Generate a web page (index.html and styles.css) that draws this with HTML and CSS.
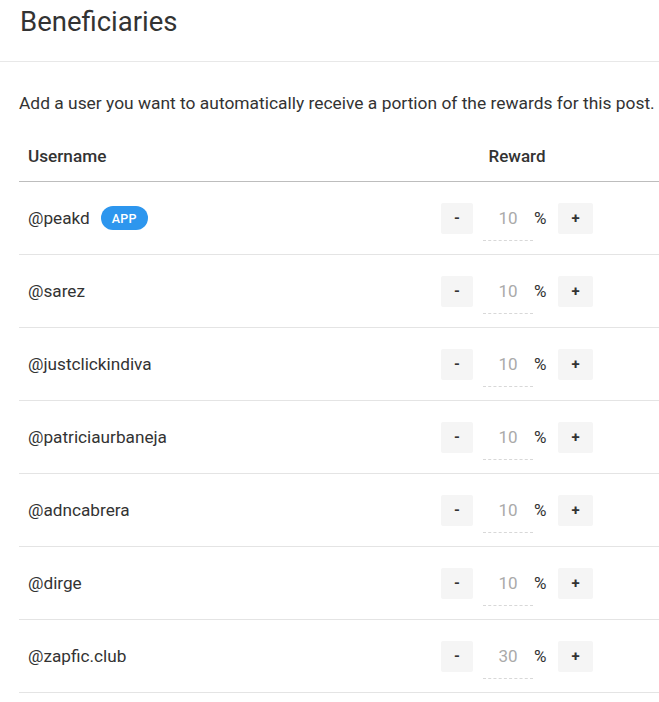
FILE: index.html
```html
<!DOCTYPE html>
<html>
<head>
<meta charset="utf-8">
<link rel="stylesheet" href="styles.css">
</head>
<body>
<div class="page">
  <header class="head">
    <h1 class="title">Beneficiaries</h1>
  </header>
  <section class="content">
    <p class="desc">Add a user you want to automatically receive a portion of the rewards for this post.</p>
    <div class="table">
      <div class="row thead">
        <div class="cell user">Username</div>
        <div class="cell reward">Reward</div>
      </div>
      <div class="row">
        <div class="cell user">@peakd <span class="badge">APP</span></div>
        <div class="cell reward"><div class="ctrl"><span class="btn">-</span><span class="inp">10</span><span class="pct">%</span><span class="btn plus">+</span></div></div>
      </div>
      <div class="row">
        <div class="cell user">@sarez</div>
        <div class="cell reward"><div class="ctrl"><span class="btn">-</span><span class="inp">10</span><span class="pct">%</span><span class="btn plus">+</span></div></div>
      </div>
      <div class="row">
        <div class="cell user">@justclickindiva</div>
        <div class="cell reward"><div class="ctrl"><span class="btn">-</span><span class="inp">10</span><span class="pct">%</span><span class="btn plus">+</span></div></div>
      </div>
      <div class="row">
        <div class="cell user">@patriciaurbaneja</div>
        <div class="cell reward"><div class="ctrl"><span class="btn">-</span><span class="inp">10</span><span class="pct">%</span><span class="btn plus">+</span></div></div>
      </div>
      <div class="row">
        <div class="cell user">@adncabrera</div>
        <div class="cell reward"><div class="ctrl"><span class="btn">-</span><span class="inp">10</span><span class="pct">%</span><span class="btn plus">+</span></div></div>
      </div>
      <div class="row">
        <div class="cell user">@dirge</div>
        <div class="cell reward"><div class="ctrl"><span class="btn">-</span><span class="inp">10</span><span class="pct">%</span><span class="btn plus">+</span></div></div>
      </div>
      <div class="row">
        <div class="cell user">@zapfic.club</div>
        <div class="cell reward"><div class="ctrl"><span class="btn">-</span><span class="inp">30</span><span class="pct">%</span><span class="btn plus">+</span></div></div>
      </div>
    </div>
  </section>
</div>
</body>
</html>
```

FILE: styles.css
```css
* { box-sizing: border-box; }
html, body { margin: 0; padding: 0; background: #fff; }
body {
  font-family: Roboto, "Noto Sans", "Liberation Sans", sans-serif;
  color: #333;
  overflow: hidden;
}
.head {
  height: 62px;
  border-bottom: 1px solid #e8e8e8;
  padding: 3px 20px 0;
}
.title {
  margin: 0;
  font-size: 27.5px;
  font-weight: 400;
  line-height: 38px;
  color: #333;
}
.content {
  padding: 0 0 0 19px;
}
.desc {
  margin: 0;
  padding-top: 30px;
  font-size: 17.4px;
  line-height: 22px;
  color: #333;
}
.table {
  margin-top: 16px;
}
.row {
  display: grid;
  grid-template-columns: 1fr 284px;
  height: 73px;
  border-bottom: 1px solid #e4e4e4;
  align-items: center;
}
.row.thead {
  height: 52px;
  border-bottom-color: #bdbdbd;
  font-weight: 500;
  font-size: 17px;
}
.cell.user {
  padding-left: 9px;
  font-size: 17.2px;
  display: flex;
  align-items: center;
}
.cell.reward {
  display: flex;
  justify-content: center;
}
.badge {
  display: inline-flex;
  align-items: center;
  justify-content: center;
  margin-left: 11px;
  width: 47px;
  height: 24px;
  border-radius: 12px;
  background: #2d96ee;
  color: #fff;
  font-size: 12.5px;
  font-weight: 500;
  letter-spacing: 0.3px;
}
.ctrl {
  display: flex;
  align-items: center;
}
.btn {
  width: 32px;
  height: 31px;
  background: #f5f5f5;
  border-radius: 2px;
  display: flex;
  align-items: center;
  justify-content: center;
  font-size: 15px;
  font-weight: 700;
  color: #333;
}
.btn.plus { width: 35px; }
.inp {
  margin-left: 10px;
  width: 50px;
  height: 31px;
  display: flex;
  align-items: center;
  justify-content: center;
  color: #aaa;
  font-size: 17px;
  position: relative;
}
.inp::after {
  content: "";
  position: absolute;
  left: 0;
  right: 0;
  bottom: -7px;
  border-bottom: 1px dashed #d8d8d8;
}
.pct {
  width: 25px;
  padding-left: 1px;
  font-size: 17px;
  color: #333;
}
```
